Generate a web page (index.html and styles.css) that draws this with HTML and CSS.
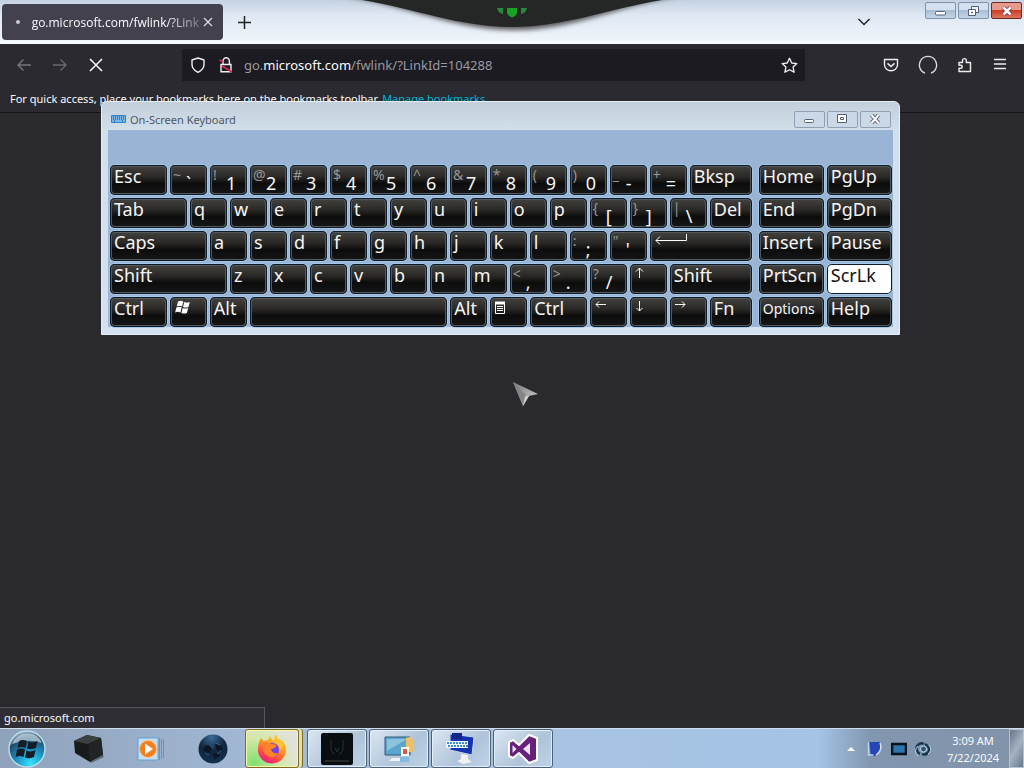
FILE: index.html
```html
<!DOCTYPE html>
<html lang="en">
<head>
<meta charset="utf-8">
<title>go.microsoft.com</title>
<link rel="stylesheet" href="styles.css">
</head>
<body>
<header class="tabstrip">
  <div class="tab">
    <span class="tab-dot"></span>
    <span class="tab-title">go.microsoft.com/fwlink/?Link</span>
    <button class="plain tab-close" aria-label="Close tab"><svg width="10" height="10" viewBox="0 0 10 10"><path d="M1 1l8 8M9 1l-8 8" stroke="#ddd" stroke-width="1.2"/></svg></button>
  </div>
  <button class="plain new-tab" aria-label="New tab"><svg width="13" height="13" viewBox="0 0 13 13"><path d="M6.500 0v13M0 6.500h13" stroke="#222" stroke-width="1.5"/></svg></button>
  <button class="plain tab-list" aria-label="List all tabs"><svg width="14" height="10" viewBox="0 0 14 10"><path d="M1.500 2l5.500 5.500L12.500 2" fill="none" stroke="#222" stroke-width="1.5"/></svg></button>
  <div class="caption-buttons">
    <button class="caption" aria-label="Minimize"><svg width="14" height="12" viewBox="0 0 14 12"><rect x="1.500" y="6.500" width="10" height="3.500" rx="1" fill="#fff" stroke="#536078"/></svg></button>
    <button class="caption" aria-label="Restore"><svg width="14" height="12" viewBox="0 0 14 12"><path d="M4.500 1.500h7v6h-7z" fill="#eef3fa" stroke="#536078"/><path d="M1.500 4.500h7v6h-7z" fill="#fff" stroke="#536078"/><path d="M4 7.500h2" stroke="#536078" stroke-width="1.500"/></svg></button>
    <button class="caption close" aria-label="Close"><svg width="14" height="12" viewBox="0 0 14 12"><path d="M3.500 2.500l7 7M10.500 2.500l-7 7" stroke="#723" stroke-width="4"/><path d="M3.500 2.500l7 7M10.500 2.500l-7 7" stroke="#fff" stroke-width="2.600"/></svg></button>
  </div>
  <svg class="notch" width="380" height="42" viewBox="0 0 380 42">
    <defs><filter id="soft" x="-10%" y="-40%" width="120%" height="200%"><feGaussianBlur stdDeviation="2.500"/></filter></defs>
    <path d="M8 -6C80 2 125 29 190 30S300 2 372 -6z" fill="#555" filter="url(#soft)"/>
    <path d="M8 -4C80 2 128 27 190 27S300 2 372 -4z" fill="#252626"/>
    <path d="M185 8h10v5q-1 3-5 4.500q-4-1.500-5-4.500z" fill="#17a321"/>
    <path d="M175 8h6v6q-5-1-6-6zM205 8h-6v6q5-1 6-6z" fill="#2a8a3c"/>
  </svg>
</header>

<nav class="toolbar">
  <div class="nav-buttons">
    <button class="plain" aria-label="Back"><svg width="16" height="16" viewBox="0 0 16 16"><path d="M15 8H2M7.500 2.500L2 8l5.500 5.500" fill="none" stroke="#77767c" stroke-width="1.400"/></svg></button>
    <button class="plain" aria-label="Forward"><svg width="16" height="16" viewBox="0 0 16 16"><path d="M1 8h13M8.500 2.500L14 8l-5.500 5.500" fill="none" stroke="#69686e" stroke-width="1.400"/></svg></button>
    <button class="plain" aria-label="Stop"><svg width="16" height="16" viewBox="0 0 16 16"><path d="M2 2l12 12M14 2L2 14" stroke="#fff" stroke-width="1.500"/></svg></button>
  </div>
  <div class="urlbar">
    <svg width="16" height="16" viewBox="0 0 16 16"><path d="M8 1l6 2v4.500c0 3.500-2.500 6-6 7.800C4.500 13.500 2 11 2 7.500V3z" fill="none" stroke="#eee" stroke-width="1.400" stroke-linejoin="round"/></svg>
    <svg width="16" height="16" viewBox="0 0 16 16"><path d="M5 7V4a3.200 3.200 0 0 1 6.400 0V7M3 7.500h10v7.300H3z" fill="none" stroke="#eee" stroke-width="1.400"/><path d="M1.500 3l3.500 2M4 9l10 6" stroke="#d2284e" stroke-width="1.800"/></svg>
    <div class="url">go.<b>microsoft.com</b>/fwlink/?LinkId=104288</div>
    <button class="plain" aria-label="Bookmark this page"><svg width="17" height="17" viewBox="0 0 16 16"><path d="M8 1.200l2.100 4.400 4.800.6-3.500 3.300.9 4.800L8 12l-4.300 2.300.9-4.800L1.100 6.200l4.800-.6z" fill="none" stroke="#eee" stroke-width="1.300" stroke-linejoin="round"/></svg></button>
  </div>
  <div class="tools">
    <button class="plain" aria-label="Pocket"><svg width="16" height="16" viewBox="0 0 16 16"><path d="M1.500 2.500h13v5.300a6.500 6 0 0 1-13 0z" fill="none" stroke="#eee" stroke-width="1.400" stroke-linejoin="round"/><path d="M4.500 6.300L8 9.500l3.500-3.200" fill="none" stroke="#eee" stroke-width="1.600"/></svg></button>
    <button class="plain" aria-label="Account"><svg width="20" height="20" viewBox="0 0 20 20"><path d="M7 18.100A8.600 8.600 0 1 1 13 18.100" fill="none" stroke="#ddd" stroke-width="1.300"/></svg></button>
    <button class="plain" aria-label="Extensions"><svg width="16" height="16" viewBox="0 0 16 16"><path d="M2 5.500h3.500v-2a1.900 1.900 0 0 1 3.800 0v2h4.200v9H2v-3.300h1.800a1.500 1.500 0 0 0 0-3H2z" fill="none" stroke="#eee" stroke-width="1.400" stroke-linejoin="round"/></svg></button>
    <button class="plain" aria-label="Menu"><svg width="16" height="16" viewBox="0 0 16 16"><path d="M2 2.500h12M2 7h12M2 11.500h12" stroke="#eee" stroke-width="1.400"/></svg></button>
  </div>
</nav>
<div class="bookmarks">For quick access, place your bookmarks here on the bookmarks toolbar. <a href="#">Manage bookmarks...</a></div>

<main class="page"><div class="status">go.microsoft.com</div></main>

<section class="osk" aria-label="On-Screen Keyboard">
  <div class="osk-title">
    <svg width="15" height="8" viewBox="0 0 15 8"><rect width="15" height="8" rx="1" fill="#2d83cf"/><path d="M1 2h13M1 4h13" stroke="#cfe8fb" stroke-dasharray="1 1"/><path d="M1 6h2M4 6h7M12 6h2" stroke="#cfe8fb"/></svg>
    <h1>On-Screen Keyboard</h1>
    <div class="osk-caption">
      <button aria-label="Minimize"><svg width="14" height="12" viewBox="0 0 14 12"><rect x="2.500" y="6.500" width="9" height="3" rx="1" fill="#fff" stroke="#536078"/></svg></button>
      <button aria-label="Maximize"><svg width="14" height="12" viewBox="0 0 14 12"><path d="M2.500 1.500h9v8h-9zM5.500 4.500h3v2h-3z" fill="#fff" stroke="#536078"/></svg></button>
      <button aria-label="Close"><svg width="14" height="12" viewBox="0 0 14 12"><path d="M3.500 2l7 8M10.500 2l-7 8" stroke="#536078" stroke-width="4"/><path d="M3.500 2l7 8M10.500 2l-7 8" stroke="#fff" stroke-width="2"/></svg></button>
    </div>
  </div>
  <div class="osk-body">
    <div class="keys main-keys">
      <div class="row"><button class="k57">Esc</button><button class="dual"><i>~</i><span>`</span></button><button class="dual"><i>!</i><span>1</span></button><button class="dual"><i>@</i><span>2</span></button><button class="dual"><i>#</i><span>3</span></button><button class="dual"><i>$</i><span>4</span></button><button class="dual"><i>%</i><span>5</span></button><button class="dual"><i>^</i><span>6</span></button><button class="dual"><i>&amp;</i><span>7</span></button><button class="dual"><i>*</i><span>8</span></button><button class="dual"><i>(</i><span>9</span></button><button class="dual"><i>)</i><span>0</span></button><button class="dual"><i>_</i><span>-</span></button><button class="dual"><i>+</i><span>=</span></button><button class="k62">Bksp</button></div>
      <div class="row"><button class="k77">Tab</button><button>q</button><button>w</button><button>e</button><button>r</button><button>t</button><button>y</button><button>u</button><button>i</button><button>o</button><button>p</button><button class="dual"><i>{</i><span>[</span></button><button class="dual"><i>}</i><span>]</span></button><button class="dual"><i>|</i><span>\</span></button><button class="k42">Del</button></div>
      <div class="row"><button class="k97">Caps</button><button>a</button><button>s</button><button>d</button><button>f</button><button>g</button><button>h</button><button>j</button><button>k</button><button>l</button><button class="dual"><i>:</i><span>;</span></button><button class="dual"><i>"</i><span>'</span></button><button class="k102" aria-label="Enter"><svg width="34" height="16" viewBox="0 0 34 16"><path d="M32.500 3v6.500H2M6 5.500l-4 4 4 4" fill="none" stroke="#fff"/></svg></button></div>
      <div class="row"><button class="k117">Shift</button><button>z</button><button>x</button><button>c</button><button>v</button><button>b</button><button>n</button><button>m</button><button class="dual"><i>&lt;</i><span>,</span></button><button class="dual"><i>&gt;</i><span>.</span></button><button class="dual"><i>?</i><span>/</span></button><button aria-label="Up"><svg width="12" height="16" viewBox="0 0 12 16"><path d="M5.500 14V4M2 7.500L5.500 4 9 7.500" fill="none" stroke="#fff"/></svg></button><button class="k82">Shift</button></div>
      <div class="row"><button class="k57">Ctrl</button><button aria-label="Windows"><svg width="18" height="18" viewBox="0 0 18 18"><path d="M4 4.500q2.500-1.500 5.300 0L8 9.500q-2.500-1.500-5.300 0zM10.300 5q2.500 1.200 5.500 0l-1.300 5q-2.500 1.200-5.500 0zM2.400 10.500q2.500-1.500 5.300 0L6.400 15.500q-2.500-1.500-5.300 0zM8.700 11q2.500 1.200 5.500 0l-1.300 5q-2.500 1.200-5.500 0z" fill="#fff"/></svg></button><button>Alt</button><button class="k198" aria-label="Space"></button><button>Alt</button><button aria-label="Application menu"><svg width="12" height="18" viewBox="0 0 12 18"><path d="M1.500 5.500h9v11h-9z" fill="none" stroke="#fff"/><path d="M1 6h10" stroke="#fff" stroke-width="3"/><path d="M3 9.500h6M3 11.500h6M3 13.500h6" stroke="#fff"/></svg></button><button class="k57">Ctrl</button><button aria-label="Left"><svg width="13" height="16" viewBox="0 0 13 16"><path d="M12 7.500H2M5 4.500l-3 3 3 3" fill="none" stroke="#fff"/></svg></button><button aria-label="Down"><svg width="12" height="16" viewBox="0 0 12 16"><path d="M5.500 4v10M2.500 11l3 3 3-3" fill="none" stroke="#fff"/></svg></button><button aria-label="Right"><svg width="13" height="16" viewBox="0 0 13 16"><path d="M1 7.500h10M8 4.500l3 3-3 3" fill="none" stroke="#fff"/></svg></button><button class="k42">Fn</button></div>
    </div>
    <div class="keys side-keys">
      <div class="row"><button>Home</button><button>PgUp</button></div>
      <div class="row"><button>End</button><button>PgDn</button></div>
      <div class="row"><button>Insert</button><button>Pause</button></div>
      <div class="row"><button>PrtScn</button><button class="pressed">ScrLk</button></div>
      <div class="row"><button class="small">Options</button><button>Help</button></div>
    </div>
  </div>
</section>

<svg class="pointer" width="28" height="28" viewBox="0 0 28 28"><defs><linearGradient id="pt" x1="0" y1="0" x2="1" y2="1"><stop offset="0" stop-color="#777"/><stop offset="1" stop-color="#d5d5d5"/></linearGradient></defs><path d="M1 1l25 12-9 2-6 10z" fill="url(#pt)"/><path d="M1 1l13 13-3 11z" fill="#858585"/><path d="M13 15l-2 10 6-10z" fill="#ccc"/></svg>

<footer class="taskbar">
  <button class="plain start" aria-label="Start"><svg width="40" height="38" viewBox="0 0 40 38"><defs><radialGradient id="orb" cx=".6" cy=".9" r=".9"><stop offset="0" stop-color="#38e0ff"/><stop offset=".45" stop-color="#1b8fc0"/><stop offset=".8" stop-color="#234a66"/><stop offset="1" stop-color="#9db8c8"/></radialGradient></defs><circle cx="20" cy="19" r="18" fill="url(#orb)" stroke="#b8dcea" stroke-width="1.500"/><path d="M5 14Q9 4 20 3.500T35 13q-15-5-30 1z" fill="#c8dce6" opacity=".7"/><path d="M12 11q4-2 8 0l-1.500 7q-4-2-8 0zM21.500 11.500q4 2 9-.5L29 18q-4 2-9 .5zM10 19.500q4-2 8 0L16.500 27q-4-2-8 0zM19.500 20.500q4 2 9-.5L27 27q-4 2-9 .5z" fill="#141c26"/></svg></button>
  <button class="plain pin" aria-label="Box"><svg width="32" height="30" viewBox="0 0 32 30"><path d="M1 7l13-6 14 3 2 17-13 7L2 19z" fill="#181b1b"/><path d="M1 7l13-6 14 3-13 6z" fill="#3b4040"/><path d="M15 10l13-6 2 17-13 7z" fill="#202424"/><path d="M17 28l13-7 1 2-13 6z" fill="#5d6a73"/></svg></button>
  <button class="plain pin" aria-label="Media Player"><svg width="28" height="26" viewBox="0 0 28 26"><path d="M1 2h20v22H1z" fill="#c6e0f2" stroke="#58a4d4"/><path d="M22.500 2v22M24.500 3v20M26.500 4v18" stroke="#4c9fc9"/><circle cx="11" cy="13" r="8.500" fill="#f27f1d" stroke="#f8c28d"/><path d="M8 7.500l8 5.500-8 5.500z" fill="#fff"/></svg></button>
  <button class="plain pin" aria-label="Web"><svg width="30" height="30" viewBox="0 0 30 30"><defs><radialGradient id="gl" cx=".45" cy=".1" r=".95"><stop offset="0" stop-color="#396a96"/><stop offset=".5" stop-color="#10263c"/><stop offset="1" stop-color="#123350"/></radialGradient></defs><circle cx="15" cy="15" r="14.500" fill="url(#gl)"/><path d="M5 15l3-4 4 1 2 3-3 4-4-1zM17 10l5 1 3 4-4 2-3-2zM14 20l5-1 3 3-5 3z" fill="#0a1726"/><path d="M7 19l4 2M18 9l4 2M19 20l4-3M12 11l3 3" stroke="#365f86"/></svg></button>
  <div class="tasks">
    <button class="task active" aria-label="Firefox"><svg width="32" height="32" viewBox="0 0 32 32"><defs><linearGradient id="fx" x1=".8" y1="0" x2=".3" y2="1"><stop offset="0" stop-color="#ffdf3a"/><stop offset=".45" stop-color="#ff9325"/><stop offset=".8" stop-color="#ff3d4e"/><stop offset="1" stop-color="#e3198a"/></linearGradient></defs><path d="M5 5l3 3q2-1 4-1l2-4q1 3 4 5l1-7q3 3 5 7l2-1q4 5 4 10a14 13.500 0 0 1-28 0Q2 10 5 5z" fill="url(#fx)"/><circle cx="16" cy="17" r="7" fill="#7542e5"/><path d="M7 10q5-1 9 1 5 0 4 3-2 2-5 2 1 5 7 4-3 5-8 4-6-2-7-8z" fill="#ff832a"/><path d="M17 9q7 1 7 9l3-6-3-6z" fill="#ffc234"/></svg></button>
    <button class="task" aria-label="Monitor"><svg width="32" height="32" viewBox="0 0 32 32"><rect width="32" height="32" rx="2" fill="#0a0d0f"/><path d="M10 7v7q0 6 4 7M22 7v7q0 6-4 7M14 15l2 4 2-4" fill="none" stroke="#1f343e"/><path d="M4 28h24" stroke="#40443a"/></svg></button>
    <button class="task" aria-label="Display settings"><svg width="32" height="32" viewBox="0 0 32 32"><path d="M2 4h25v18H2z" fill="#5aa5cd" stroke="#345b76"/><path d="M4 6h20L4 18z" fill="#8cc2de"/><path d="M9 25h12l3 3H6z" fill="#eef4f8"/><path d="M23 5q6-3 7 3v11h-7z" fill="#eebf63"/><path d="M18 14h8v9h-8z" fill="#fff"/><path d="M20 16h4v5h-4z" fill="#d85b35"/><path d="M17 24h9v5h-9z" fill="#81bce0"/></svg></button>
    <button class="task" aria-label="On-Screen Keyboard"><svg width="32" height="32" viewBox="0 0 32 32"><path d="M5 1l24 3-2 18-22-5z" fill="#1734b0" stroke="#c2d9ee"/><path d="M7 0h10v6H7z" fill="#13278b"/><path d="M1 8h22v7H1z" fill="#f3f8ff"/><path d="M2 10h20M3 13h20" stroke="#3f8fd0" stroke-width="2" stroke-dasharray="2 1"/><path d="M16 21l7 1v4l4 3-9 2-6-3 4-2z" fill="#f1f1f1"/></svg></button>
    <button class="task" aria-label="Visual Studio"><svg width="32" height="32" viewBox="0 0 32 32"><path d="M22 2l8 3v22l-8 3-10-10-6 5-4-2V9l4-2 6 5z" fill="#68217a" stroke="#fff" stroke-width="2" stroke-linejoin="round"/><path d="M5.500 12v8l4-4zM23 10v12l-7-6z" fill="#e9e3f0"/></svg></button>
  </div>
  <div class="tray">
    <svg width="8" height="6" viewBox="0 0 8 6"><path d="M0 5l4-4 4 4z" fill="#fff"/></svg>
    <svg width="16" height="16" viewBox="0 0 16 16"><path d="M2 1h11v9q-1 4-6 5H4z" fill="#2346b4"/><path d="M1.500 1v13h5" fill="none" stroke="#b9d2f2" stroke-width="1.500"/><path d="M13 2q3 7-4 12" fill="none" stroke="#d6e3ee" stroke-width="1.500"/></svg>
    <svg width="16" height="14" viewBox="0 0 16 14"><path d="M1 2h14v10H1z" fill="#2c75a8" stroke="#07131d" stroke-width="2.500"/></svg>
    <svg width="16" height="16" viewBox="0 0 16 16"><path d="M5 13Q0 10 2 5q3-4 7-2M10 3q5 3 4 7-3 5-7 3" fill="none" stroke="#16384d" stroke-width="2.500"/><circle cx="8.500" cy="8" r="3" fill="#285873" stroke="#c1dae7"/><path d="M3 15q-5-5 0-10M14 4q4 5-1 9" fill="none" stroke="#bfd4e4"/></svg>
    <time class="clock">3:09 AM<br>7/22/2024</time>
    <button class="plain show-desktop" aria-label="Show desktop"></button>
  </div>
</footer>
</body>
</html>
```
FILE: styles.css
```css
* { box-sizing: border-box; }
body {
  margin: 0;
  height: 100vh;
  display: flex;
  flex-direction: column;
  position: relative;
  overflow: hidden;
  background: #2a2a2e;
  font-family: "Noto Sans", "Open Sans", sans-serif;
  font-size: 11px;
  color: #fbfbfe;
}
button { font: inherit; color: inherit; padding: 0; margin: 0; }
svg { display: block; flex: none; }
.plain { border: 0; background: none; display: flex; align-items: center; justify-content: center; }

.tabstrip {
  position: relative;
  display: flex;
  align-items: center;
  height: 44px;
  padding-left: 2px;
  background: linear-gradient(#c4d2e2, #dfe8f3 35%, #eff4fb 90%, #fff);
}
.tab {
  display: flex;
  align-items: center;
  width: 221px;
  height: 36px;
  padding: 0 10px 0 14px;
  border-radius: 4px;
  background: #42414d;
}
.tab-dot { width: 4px; height: 4px; border-radius: 2px; background: #c9c9ce; }
.tab-title {
  flex: 1;
  margin-left: 12px;
  font: 12px "Open Sans", sans-serif;
  white-space: nowrap;
  mask-image: linear-gradient(to right, #000 80%, rgba(0, 0, 0, 0.3));
}
.tab-close { margin-left: 4px; }
.new-tab { margin-left: 15px; }
.tab-list { margin-left: auto; margin-right: 54px; }
.caption-buttons { display: flex; gap: 2px; align-self: flex-start; padding: 2px 2px 0 0; }
.caption {
  display: flex;
  align-items: center;
  justify-content: center;
  width: 31px;
  height: 17px;
  border: 1px solid #7c92ad;
  border-radius: 2px;
  background: linear-gradient(#d3e0ef 45%, #a8bdd6 50%, #c5d6e8);
}
.caption.close { border-color: #6c2a26; background: linear-gradient(#e79a8c 45%, #c93f2b 50%, #dc7457); }
.notch { position: absolute; top: 0; left: 50%; margin-left: -190px; pointer-events: none; }

.toolbar {
  display: flex;
  align-items: center;
  height: 42px;
  padding: 0 16px;
  background: #2a2a30;
}
.nav-buttons { display: flex; gap: 20px; margin-right: 78px; }
.urlbar {
  display: flex;
  align-items: center;
  flex: 1;
  height: 32px;
  padding: 0 7px 0 8px;
  background: #1c1b21;
}
.urlbar svg + svg { margin-left: 12px; }
.url { flex: 1; margin-left: 10px; font-size: 13px; color: #9a999f; white-space: nowrap; }
.url b { font-weight: 400; color: #fbfbfe; }
.tools { display: flex; align-items: center; gap: 19px; margin-left: 78px; }
.bookmarks {
  height: 27px;
  padding: 4px 10px;
  line-height: 18px;
  border-bottom: 1px solid #151519;
  background: #2a2a30;
}
.bookmarks a { color: #00b5d8; text-decoration: none; }

.page { flex: 1; display: flex; align-items: flex-end; }
.status {
  width: 265px;
  height: 21px;
  padding-left: 4px;
  line-height: 20px;
  border: 1px solid #57565d;
  border-width: 1px 1px 0 0;
  background: #2f2e34;
}

.osk {
  position: absolute;
  top: 101px;
  left: 101px;
  width: 78vw;
  padding: 0 6px 7px;
  border: 1px solid #e6eef6;
  border-radius: 6px 6px 0 0;
  background: linear-gradient(#c3d0dc, #d2e0ec 30px, #d3e1f0);
}
.osk-title { display: flex; align-items: center; height: 28px; padding: 6px 2px 0 3px; color: #4c5866; }
.osk-title h1 { margin: 0 auto 0 4px; font-size: 11px; font-weight: 400; }
.osk-caption { display: flex; gap: 2px; }
.osk-caption button {
  display: flex;
  align-items: center;
  justify-content: center;
  width: 31px;
  height: 17px;
  border: 1px solid #8fa0b4;
  border-radius: 2px;
  background: #cbd9e6;
}
.osk-body {
  display: flex;
  gap: 7px;
  padding: 35px 1px 0 2px;
  background: #9ab4d5;
}
.keys { display: flex; flex-direction: column; gap: 3px; min-width: 0; }
.main-keys { flex: 642 1 0; }
.side-keys { flex: 133 1 0; }
.row { display: flex; gap: 3px; }
.row button {
  display: flex;
  flex: 37 1 0;
  min-width: 0;
  height: 30px;
  border: 0;
  border-radius: 5px;
  background: linear-gradient(#464440, #292826 40%, #0c0c0c 62%, #171717);
  box-shadow: inset 0 0 0 1px #0c1a27, inset 0 0 0 2px #53595c, 0 0 0 1px #a6c8e6;
  font-size: 18px;
  line-height: 23px;
  text-indent: 4px;
  color: #f6f6f6;
  white-space: nowrap;
}
.row button > svg { margin-left: 4px; }
.row .k42 { flex-grow: 42; }
.row .k57 { flex-grow: 57; }
.row .k62 { flex-grow: 62; }
.row .k77 { flex-grow: 77; }
.row .k82 { flex-grow: 82; }
.row .k97 { flex-grow: 97; }
.row .k102 { flex-grow: 102; }
.row .k117 { flex-grow: 117; }
.row .k198 { flex-grow: 198; }
.row .dual { text-indent: 0; text-align: left; }
.dual i { flex: none; width: 13px; margin-left: 3px; font-style: normal; font-size: 14px; line-height: 19px; color: #969696; }
.dual span { padding-top: 7px; }
.row .small { font-size: 14px; }
.row .pressed { background: #fff; color: #111; box-shadow: 0 0 0 1px #a6c8e6, inset 0 0 0 1px #0c1a27; }

.pointer { position: absolute; top: 381px; left: 512px; }

.taskbar {
  display: flex;
  align-items: center;
  height: 40px;
  border-top: 1px solid #cfdded;
  background: linear-gradient(to right, #8fa2bb, #a2b8d4 25%, #a9c4e2 50%, #a4c3e5 80%, #8296b0 85%, #8193a9);
}
.start { width: 54px; }
.pin { width: 62px; padding-left: 8px; }
.tasks { display: flex; margin-left: 5px; }
.task {
  display: flex;
  align-items: center;
  justify-content: center;
  width: 60px;
  height: 39px;
  margin-right: 2px;
  border: 1px solid #4c6077;
  border-radius: 3px;
  background: linear-gradient(135deg, #dbe6f2, #afc3da 60%, #bfd3e8);
  box-shadow: inset 0 0 0 1px #e4eef8;
}
.task.active {
  width: 54px;
  margin-right: 8px;
  border-color: #776b27;
  background: radial-gradient(circle at 15% 90%, #7fe070, #d3e8a8 45%, #e2e2da 80%);
  box-shadow: inset 0 0 0 1px #fff8a2, 3px 0 0 #e6dfa9, 4px 0 0 #776b27;
}
.tray { display: flex; align-items: center; gap: 8px; height: 39px; margin-left: auto; }
.tray svg:first-child { margin-right: 4px; }
.clock { width: 56px; margin-left: 6px; line-height: 17px; text-align: center; }
.show-desktop { width: 15px; height: 39px; border: 1px solid #b4c2d1; background: linear-gradient(120deg, #667587, #a4b2c2 50%, #66768a); }
```
